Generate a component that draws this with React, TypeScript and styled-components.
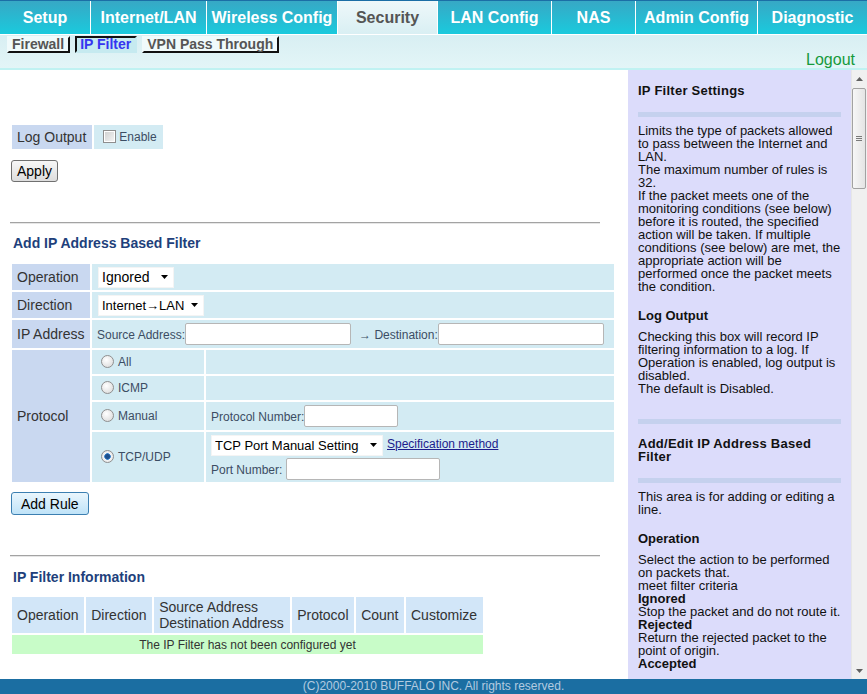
import React from "react";
import styled, { createGlobalStyle } from "styled-components";

const FONT = `"Liberation Sans", Arial, sans-serif`;

const svgUrl = (svg: string) =>
  `url("data:image/svg+xml,${encodeURIComponent(svg)}")`;

const selectArrow = svgUrl(
  "<svg xmlns='http://www.w3.org/2000/svg' width='7' height='4'><path d='M0 0h7L3.5 4z' fill='#000'/></svg>"
);

const GlobalStyle = createGlobalStyle`
  html, body {
    margin: 0;
    padding: 0;
    height: 100%;
    overflow: hidden;
  }
  body {
    font-family: ${FONT};
    background: #fff;
  }
`;

const Page = styled.div`
  height: 100vh;
  display: flex;
  flex-direction: column;
  font-family: ${FONT};
`;

/* ---------- header ---------- */

const Header = styled.header`
  flex: none;
  height: 68px;
  display: flex;
  flex-direction: column;
  background: linear-gradient(#cce8ee, #e3f5f7);
  border-bottom: 2px solid #c0f2f2;
`;

const TabBar = styled.nav`
  display: flex;
  height: 33px;
  border-top: 1px solid #1b6ea6;
  border-bottom: 1px solid #fff;
`;

const Tab = styled.a<{ $w: number; $active?: boolean }>`
  flex: none;
  box-sizing: border-box;
  width: ${(p) => p.$w}px;
  display: flex;
  align-items: center;
  justify-content: center;
  border-left: 1px solid #fff;
  font-size: 16px;
  font-weight: bold;
  color: ${(p) => (p.$active ? "#555" : "#fff")};
  background: ${(p) =>
    p.$active
      ? "linear-gradient(#eef8fa, #d9eff3)"
      : "linear-gradient(#37a8c5, #1acadd)"};
  text-decoration: none;
  &:first-child {
    border-left: 0;
  }
`;

const SubBar = styled.div`
  flex: 1;
  display: flex;
  justify-content: space-between;
  padding: 1px 12px 0 7px;
`;

const SubNav = styled.div`
  display: flex;
  gap: 5px;
  align-self: flex-start;
`;

const SubTab = styled.a<{ $active?: boolean }>`
  display: block;
  height: 13px;
  padding: 0 4px 0 3px;
  border: 2px solid;
  border-color: ${(p) =>
    p.$active ? "#111 #c6eaf0 #c6eaf0 #111" : "#f0fafb #111 #111 #f0fafb"};
  background: ${(p) => (p.$active ? "#c6eaf0" : "#f0fafb")};
  color: ${(p) => (p.$active ? "#3535f0" : "#555")};
  font-size: 14px;
  font-weight: bold;
  line-height: 13px;
  white-space: nowrap;
`;

const Logout = styled.a`
  align-self: flex-end;
  color: #159a3c;
  font-size: 16px;
  line-height: 16px;
`;

/* ---------- body ---------- */

const Body = styled.div`
  flex: 1;
  min-height: 0;
  display: flex;
`;

const Main = styled.main`
  flex: 1;
  min-width: 0;
  overflow: hidden;
  padding-left: 10px;
`;

const LogTable = styled.table`
  border-spacing: 2px;
  margin-top: 53px;
`;

const Row = styled.tr<{ $h: number }>`
  height: ${(p) => p.$h}px;
`;

const LabelCell = styled.td`
  background: #c9d8f0;
  color: #333;
  font-size: 14px;
  padding: 0 6px 0 5px;
  white-space: nowrap;
`;

const ValueCell = styled.td<{ $pad?: string }>`
  background: #d3ebf3;
  color: #3c4d63;
  font-size: 12px;
  padding: ${(p) => p.$pad || "0 6px"};
  white-space: nowrap;
  vertical-align: middle;
`;

const Checkbox = styled.input`
  appearance: none;
  box-sizing: border-box;
  width: 13px;
  height: 13px;
  margin: 0 3px 0 3px;
  vertical-align: -2px;
  border: 1px solid #8e8e8e;
  box-shadow: inset 0 0 0 1px #fff;
  background: linear-gradient(135deg, #cfcfcf, #f6f6f6);
`;

const Radio = styled.input`
  appearance: none;
  box-sizing: border-box;
  width: 13px;
  height: 13px;
  margin: 0 4px 0 3px;
  vertical-align: -2px;
  border-radius: 50%;
  border: 1px solid #8f8f8f;
  background: radial-gradient(circle at 40% 35%, #fff, #d6d6d6);
  &:checked {
    background: radial-gradient(circle at 50% 50%, #1d4f8c 0 2px, #3d86cf 3px, #f4f4f4 3.6px, #dcdcdc);
  }
`;

const Button = styled.button`
  display: block;
  box-sizing: border-box;
  margin-left: 1px;
  font-family: ${FONT};
  font-size: 14px;
  color: #000;
  border-radius: 3px;
  cursor: pointer;
`;

const ApplyButton = styled(Button)`
  height: 22px;
  margin-top: 9px;
  padding: 0 5px;
  border: 1px solid #707070;
  background: linear-gradient(#f7f7f7, #dddddd);
`;

const AddRuleButton = styled(Button)`
  height: 23px;
  margin-top: 8px;
  padding: 0 9px;
  border: 1px solid #3c7fb1;
  background: linear-gradient(#eaf6fd, #bfe3f8);
`;

const Rule = styled.hr`
  width: 590px;
  height: 0;
  margin: 40px 0 0;
  border: 0;
  border-top: 1px solid #a3a3a3;
  border-bottom: 1px solid #e6e6e6;
`;

const SectionTitle = styled.h2<{ $top: number }>`
  margin: ${(p) => p.$top}px 0 0 3px;
  font-size: 14px;
  line-height: 16px;
  font-weight: bold;
  color: #213f7b;
`;

const FormTable = styled.table`
  width: 606px;
  table-layout: fixed;
  border-spacing: 2px;
  margin-top: 11px;
`;

const Col = styled.col<{ $w: number }>`
  width: ${(p) => p.$w}px;
`;

const Select = styled.select<{ $w: number; $size?: number }>`
  appearance: none;
  box-sizing: border-box;
  width: ${(p) => p.$w}px;
  height: 21px;
  padding: 0 12px 0 3px;
  border: 1px solid #f4f4f4;
  background: #fff ${selectArrow} no-repeat right 5px center;
  font-family: ${FONT};
  font-size: ${(p) => p.$size || 14}px;
  color: #000;
  vertical-align: middle;
`;

const TextInput = styled.input<{ $w: number }>`
  box-sizing: border-box;
  width: ${(p) => p.$w}px;
  height: 22px;
  margin: 0;
  border: 1px solid #b6b6b6;
  border-radius: 2px;
  background: #fff;
  font-family: ${FONT};
  font-size: 13px;
`;

const Arrow = styled.span`
  margin-left: 8px;
  font-size: 12px;
`;

const SpecLink = styled.a`
  margin-left: 4px;
  color: #1c1c8c;
  font-size: 12px;
  text-decoration: underline;
`;

const PortLine = styled.div`
  margin-top: 2px;
`;

const InfoTable = styled.table`
  width: 475px;
  border-spacing: 2px;
  margin-top: 10px;
`;

const Th = styled.th`
  height: 36px;
  padding: 0 5px;
  background: #d2e6f8;
  color: #333;
  font-size: 14px;
  font-weight: normal;
  line-height: 16px;
  text-align: left;
  white-space: nowrap;
`;

const EmptyCell = styled.td`
  height: 19px;
  padding: 0;
  background: #c8fcc8;
  color: #333;
  font-size: 12px;
  text-align: center;
`;

/* ---------- help panel ---------- */

const Help = styled.aside`
  flex: none;
  width: 239px;
  display: flex;
`;

const HelpScroll = styled.div`
  flex: 1;
  min-width: 0;
  overflow: hidden;
  padding: 14px 10px 0;
  background: #dcdcfb;
  color: #111;
  font-size: 13px;
  line-height: 13px;
`;

const ScrollBar = styled.div`
  flex: none;
  width: 16px;
  display: flex;
  flex-direction: column;
  background: #f0f0f0;
  border-left: 1px solid #e6e6e6;
  box-sizing: border-box;
`;

const ScrollButton = styled.div`
  height: 17px;
  display: flex;
  align-items: center;
  justify-content: center;
`;

const ScrollThumb = styled.div`
  height: 99px;
  margin: 1px 1px 0 0;
  display: flex;
  align-items: center;
  justify-content: center;
  border: 1px solid #a2a2a2;
  border-radius: 2px;
  background: linear-gradient(90deg, #f7f7f7, #e4e4e4);
`;

const ScrollSpace = styled.div`
  flex: 1;
`;

const HelpSection = styled.section`
  & + & {
    margin-top: 24px;
    padding-top: 13px;
    border-top: 5px solid #c5d1ee;
  }
`;

const HelpTitle = styled.h3`
  margin: 0;
  font-size: 13px;
  line-height: 13px;
  font-weight: bold;
  letter-spacing: 0.25px;
`;

const HelpBar = styled.div`
  height: 5px;
  margin: 15px 0 7px;
  background: #c5d1ee;
`;

const HelpHeading = styled.h4`
  margin: 16px 0 8px;
  font-size: 13px;
  line-height: 13px;
  font-weight: bold;
`;

const HelpText = styled.p`
  margin: 0;
`;

/* ---------- footer ---------- */

const Footer = styled.footer`
  flex: none;
  height: 15px;
  background: #1b6ea2;
  color: #b2cbe0;
  font-size: 12px;
  line-height: 15px;
  text-align: center;
`;

const tabs = [
  { label: "Setup", w: 90 },
  { label: "Internet/LAN", w: 116 },
  { label: "Wireless Config", w: 131 },
  { label: "Security", w: 100, active: true },
  { label: "LAN Config", w: 114 },
  { label: "NAS", w: 84 },
  { label: "Admin Config", w: 122 },
  { label: "Diagnostic", w: 110 },
];

const infoColumns = ["Operation", "Direction", "", "Protocol", "Count", "Customize"];

const Triangle = ({ up }: { up?: boolean }) => (
  <svg width="7" height="4" viewBox="0 0 7 4">
    <path d={up ? "M0 4h7L3.5 0z" : "M0 0h7L3.5 4z"} fill="#606060" />
  </svg>
);

const App = () => {
  return (
    <Page>
      <GlobalStyle />
      <Header>
        <TabBar>
          {tabs.map((t) => (
            <Tab key={t.label} $w={t.w} $active={t.active}>
              {t.label}
            </Tab>
          ))}
        </TabBar>
        <SubBar>
          <SubNav>
            <SubTab>Firewall</SubTab>
            <SubTab $active>IP Filter</SubTab>
            <SubTab>VPN Pass Through</SubTab>
          </SubNav>
          <Logout>Logout</Logout>
        </SubBar>
      </Header>

      <Body>
        <Main>
          <LogTable>
            <tbody>
              <Row $h={24}>
                <LabelCell>Log Output</LabelCell>
                <ValueCell>
                  <label>
                    <Checkbox type="checkbox" />
                    Enable
                  </label>
                </ValueCell>
              </Row>
            </tbody>
          </LogTable>
          <ApplyButton>Apply</ApplyButton>

          <Rule />
          <SectionTitle $top={11}>Add IP Address Based Filter</SectionTitle>
          <FormTable>
            <colgroup>
              <Col $w={78} />
              <Col $w={112} />
              <Col $w={408} />
            </colgroup>
            <tbody>
              <Row $h={26}>
                <LabelCell>Operation</LabelCell>
                <ValueCell colSpan={2}>
                  <Select $w={76} defaultValue="ignored">
                    <option value="ignored">Ignored</option>
                    <option value="rejected">Rejected</option>
                    <option value="accepted">Accepted</option>
                  </Select>
                </ValueCell>
              </Row>
              <Row $h={26}>
                <LabelCell>Direction</LabelCell>
                <ValueCell colSpan={2}>
                  <Select $w={106} $size={13} defaultValue="in">
                    <option value="in">Internet→LAN</option>
                    <option value="out">LAN→Internet</option>
                    <option value="both">Both</option>
                  </Select>
                </ValueCell>
              </Row>
              <Row $h={28}>
                <LabelCell>IP Address</LabelCell>
                <ValueCell colSpan={2} $pad="0 5px">
                  Source Address:
                  <TextInput type="text" $w={166} />
                  <Arrow>→</Arrow> Destination:
                  <TextInput type="text" $w={166} />
                </ValueCell>
              </Row>
              <Row $h={24}>
                <LabelCell rowSpan={4}>Protocol</LabelCell>
                <ValueCell>
                  <label>
                    <Radio type="radio" name="proto" />
                    All
                  </label>
                </ValueCell>
                <ValueCell />
              </Row>
              <Row $h={24}>
                <ValueCell>
                  <label>
                    <Radio type="radio" name="proto" />
                    ICMP
                  </label>
                </ValueCell>
                <ValueCell />
              </Row>
              <Row $h={28}>
                <ValueCell>
                  <label>
                    <Radio type="radio" name="proto" />
                    Manual
                  </label>
                </ValueCell>
                <ValueCell $pad="0 5px">
                  Protocol Number:
                  <TextInput type="text" $w={94} />
                </ValueCell>
              </Row>
              <Row $h={50}>
                <ValueCell>
                  <label>
                    <Radio type="radio" name="proto" defaultChecked />
                    TCP/UDP
                  </label>
                </ValueCell>
                <ValueCell $pad="0 5px">
                  <div>
                    <Select $w={172} $size={13} defaultValue="manual">
                      <option value="manual">TCP Port Manual Setting</option>
                      <option value="udp">UDP Port Manual Setting</option>
                      <option value="both">TCP/UDP Port Manual Setting</option>
                    </Select>
                    <SpecLink>Specification method</SpecLink>
                  </div>
                  <PortLine>
                    Port Number: <TextInput type="text" $w={154} />
                  </PortLine>
                </ValueCell>
              </Row>
            </tbody>
          </FormTable>
          <AddRuleButton>Add Rule</AddRuleButton>

          <Rule />
          <SectionTitle $top={12}>IP Filter Information</SectionTitle>
          <InfoTable>
            <thead>
              <tr>
                {infoColumns.map((c, i) =>
                  c ? (
                    <Th key={i}>{c}</Th>
                  ) : (
                    <Th key={i}>
                      Source Address
                      <br />
                      Destination Address
                    </Th>
                  )
                )}
              </tr>
            </thead>
            <tbody>
              <tr>
                <EmptyCell colSpan={6}>The IP Filter has not been configured yet</EmptyCell>
              </tr>
            </tbody>
          </InfoTable>
        </Main>

        <Help>
          <HelpScroll>
            <HelpSection>
              <HelpTitle>IP Filter Settings</HelpTitle>
              <HelpBar />
              <HelpText>
                Limits the type of packets allowed to pass between the Internet and LAN.
                <br />
                The maximum number of rules is 32.
                <br />
                If the packet meets one of the monitoring conditions (see below) before it is
                routed, the specified action will be taken. If multiple conditions (see below)
                are met, the appropriate action will be performed once the packet meets the
                condition.
              </HelpText>
              <HelpHeading>Log Output</HelpHeading>
              <HelpText>
                Checking this box will record IP filtering information to a log. If Operation
                is enabled, log output is disabled.
                <br />
                The default is Disabled.
              </HelpText>
            </HelpSection>

            <HelpSection>
              <HelpTitle>Add/Edit IP Address Based Filter</HelpTitle>
              <HelpBar />
              <HelpText>This area is for adding or editing a line.</HelpText>
              <HelpHeading>Operation</HelpHeading>
              <HelpText>
                Select the action to be performed on packets that.
                <br />
                meet filter criteria
                <br />
                <b>Ignored</b>
                <br />
                Stop the packet and do not route it.
                <br />
                <b>Rejected</b>
                <br />
                Return the rejected packet to the point of origin.
                <br />
                <b>Accepted</b>
              </HelpText>
            </HelpSection>
          </HelpScroll>
          <ScrollBar>
            <ScrollButton>
              <Triangle up />
            </ScrollButton>
            <ScrollThumb>
              <svg width="6" height="5" viewBox="0 0 6 5">
                <path d="M0 .5h6M0 2.5h6M0 4.5h6" stroke="#7a7a7a" />
              </svg>
            </ScrollThumb>
            <ScrollSpace />
            <ScrollButton>
              <Triangle />
            </ScrollButton>
          </ScrollBar>
        </Help>
      </Body>

      <Footer>(C)2000-2010 BUFFALO INC. All rights reserved.</Footer>
    </Page>
  );
};

export default App;
